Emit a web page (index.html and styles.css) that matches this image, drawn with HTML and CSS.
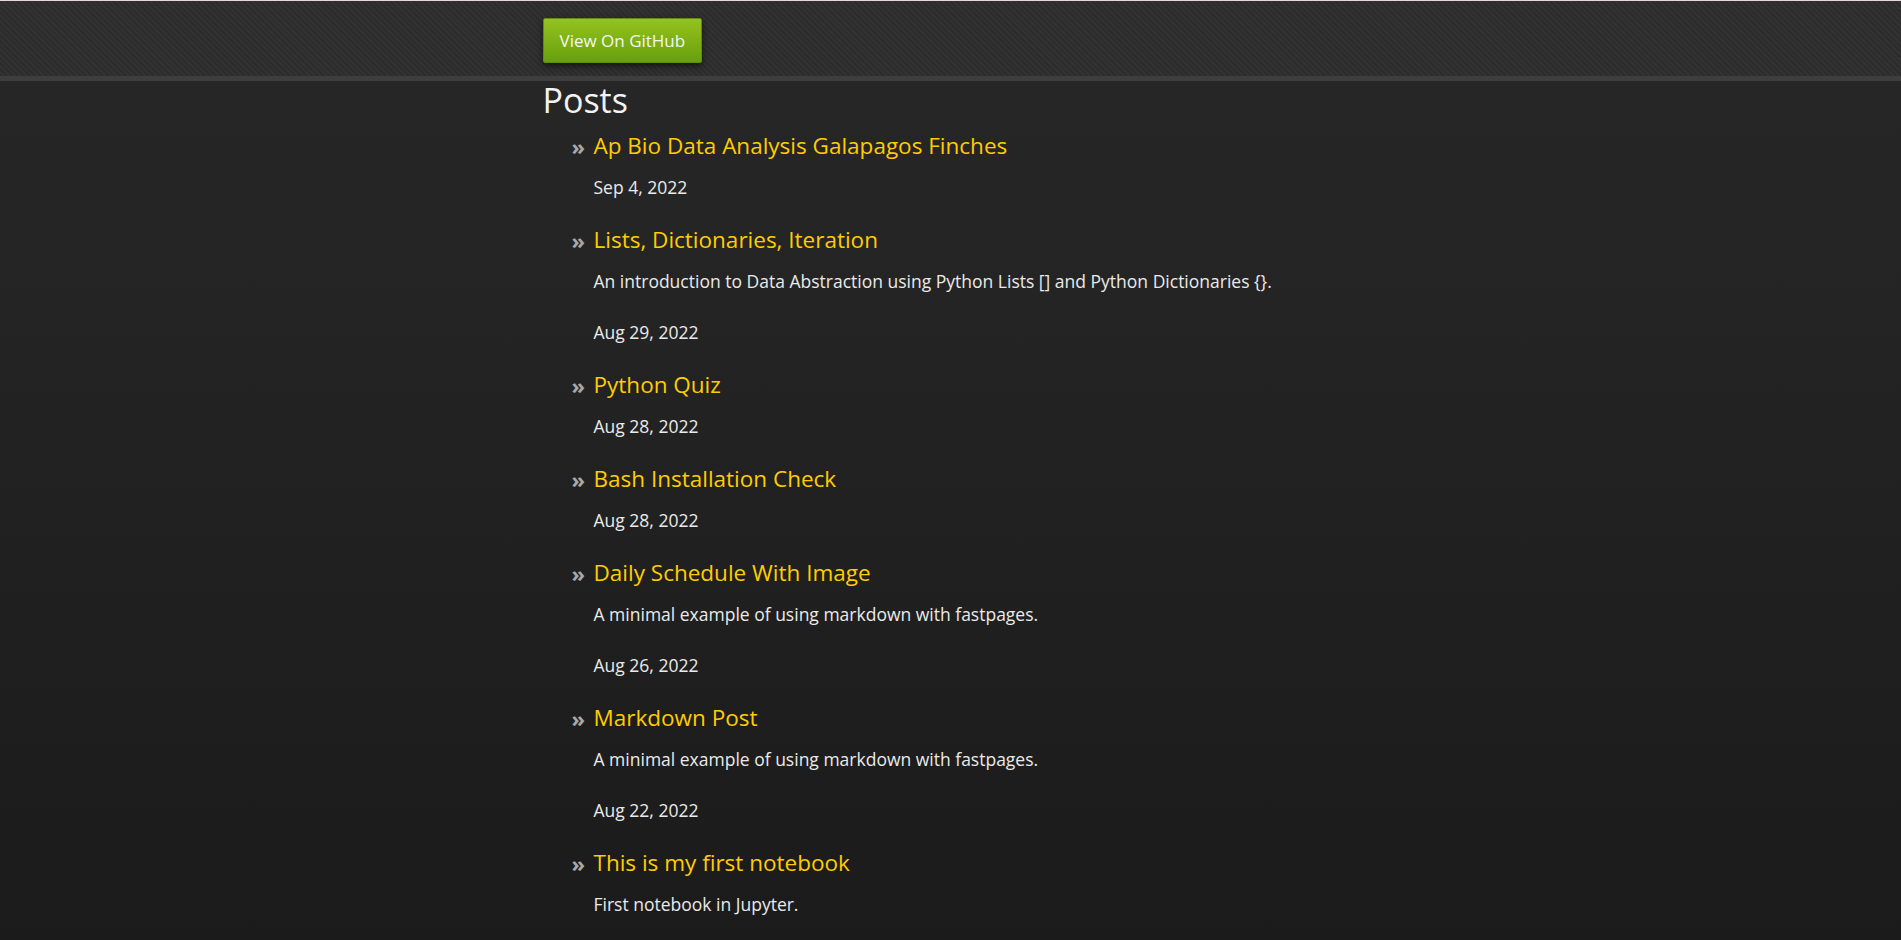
FILE: index.html
```html
<!DOCTYPE html>
<html lang="en">
<head>
<meta charset="utf-8">
<title>Posts</title>
<link rel="stylesheet" href="styles.css">
</head>
<body>
<div class="page">
  <header class="site-header">
    <div class="inner">
      <a class="btn-github" href="#">View On GitHub</a>
    </div>
  </header>
  <div class="header-band"></div>
  <main class="inner content">
    <h1 class="page-title">Posts</h1>
    <ul class="post-list">
      <li class="post">
        <h3 class="post-title"><a href="#">Ap Bio Data Analysis Galapagos Finches</a></h3>
        <p class="post-date">Sep 4, 2022</p>
      </li>
      <li class="post">
        <h3 class="post-title"><a href="#">Lists, Dictionaries, Iteration</a></h3>
        <p class="post-desc">An introduction to Data Abstraction using Python Lists [] and Python Dictionaries {}.</p>
        <p class="post-date">Aug 29, 2022</p>
      </li>
      <li class="post">
        <h3 class="post-title"><a href="#">Python Quiz</a></h3>
        <p class="post-date">Aug 28, 2022</p>
      </li>
      <li class="post">
        <h3 class="post-title"><a href="#">Bash Installation Check</a></h3>
        <p class="post-date">Aug 28, 2022</p>
      </li>
      <li class="post">
        <h3 class="post-title"><a href="#">Daily Schedule With Image</a></h3>
        <p class="post-desc">A minimal example of using markdown with fastpages.</p>
        <p class="post-date">Aug 26, 2022</p>
      </li>
      <li class="post">
        <h3 class="post-title"><a href="#">Markdown Post</a></h3>
        <p class="post-desc">A minimal example of using markdown with fastpages.</p>
        <p class="post-date">Aug 22, 2022</p>
      </li>
      <li class="post">
        <h3 class="post-title"><a href="#">This is my first notebook</a></h3>
        <p class="post-desc">First notebook in Jupyter.</p>
      </li>
    </ul>
  </main>
</div>
</body>
</html>
```
FILE: styles.css
```css
html, body {
  margin: 0;
  padding: 0;
}

body {
  background: #1b1b1b;
  font-family: "Open Sans", "Liberation Sans", sans-serif;
  color: #eaeaea;
  font-size: 17.5px;
}

.page {
  border-top: 1px solid #e6d7de;
  min-height: 939px;
  background: linear-gradient(180deg, #272727 0px, #242424 300px, #1e1e1e 700px, #1b1b1b 940px);
}

.inner {
  width: 816px;
  margin: 0 auto;
}

.site-header {
  height: 75px;
  box-sizing: border-box;
  padding-top: 17px;
  background-color: #2d2d2d;
  background-image: repeating-linear-gradient(45deg, #2c2c2c 0px, #2c2c2c 2px, #323232 2px, #323232 4px);
}

.header-band {
  height: 5px;
  background: #3e3e3e;
}

.btn-github {
  display: inline-block;
  height: 43px;
  line-height: 43px;
  padding: 0 16px;
  border: 1px solid #5e8e10;
  border-radius: 2px;
  background: linear-gradient(180deg, #93c31f 0%, #7fb116 50%, #66a00c 100%);
  box-shadow: 0 3px 6px rgba(0, 0, 0, 0.55);
  color: #f4f8ec;
  font-size: 17px;
  font-weight: 400;
  text-decoration: none;
}

.page-title {
  margin: 0;
  font-size: 34px;
  line-height: 38px;
  font-weight: 400;
  color: #f2f2f2;
}

.post-list {
  list-style: none;
  margin: 12px 0 0 0;
  padding: 0 0 0 51px;
}

.post-title {
  position: relative;
  margin: 0 0 14px 0;
  font-size: 22.5px;
  line-height: 30px;
  font-weight: 400;
}

.post-title::before {
  content: "\00BB";
  position: absolute;
  left: -22px;
  top: 0;
  font-size: 22px;
  line-height: 30px;
  font-weight: 700;
  color: #a9a9a9;
}

.post-title a {
  color: #ffcc00;
  text-decoration: none;
}

.post-desc {
  margin: 1px 0 27px 0;
  line-height: 24px;
}

.post-date {
  margin: 0 0 26px 0;
  line-height: 24px;
}
```
